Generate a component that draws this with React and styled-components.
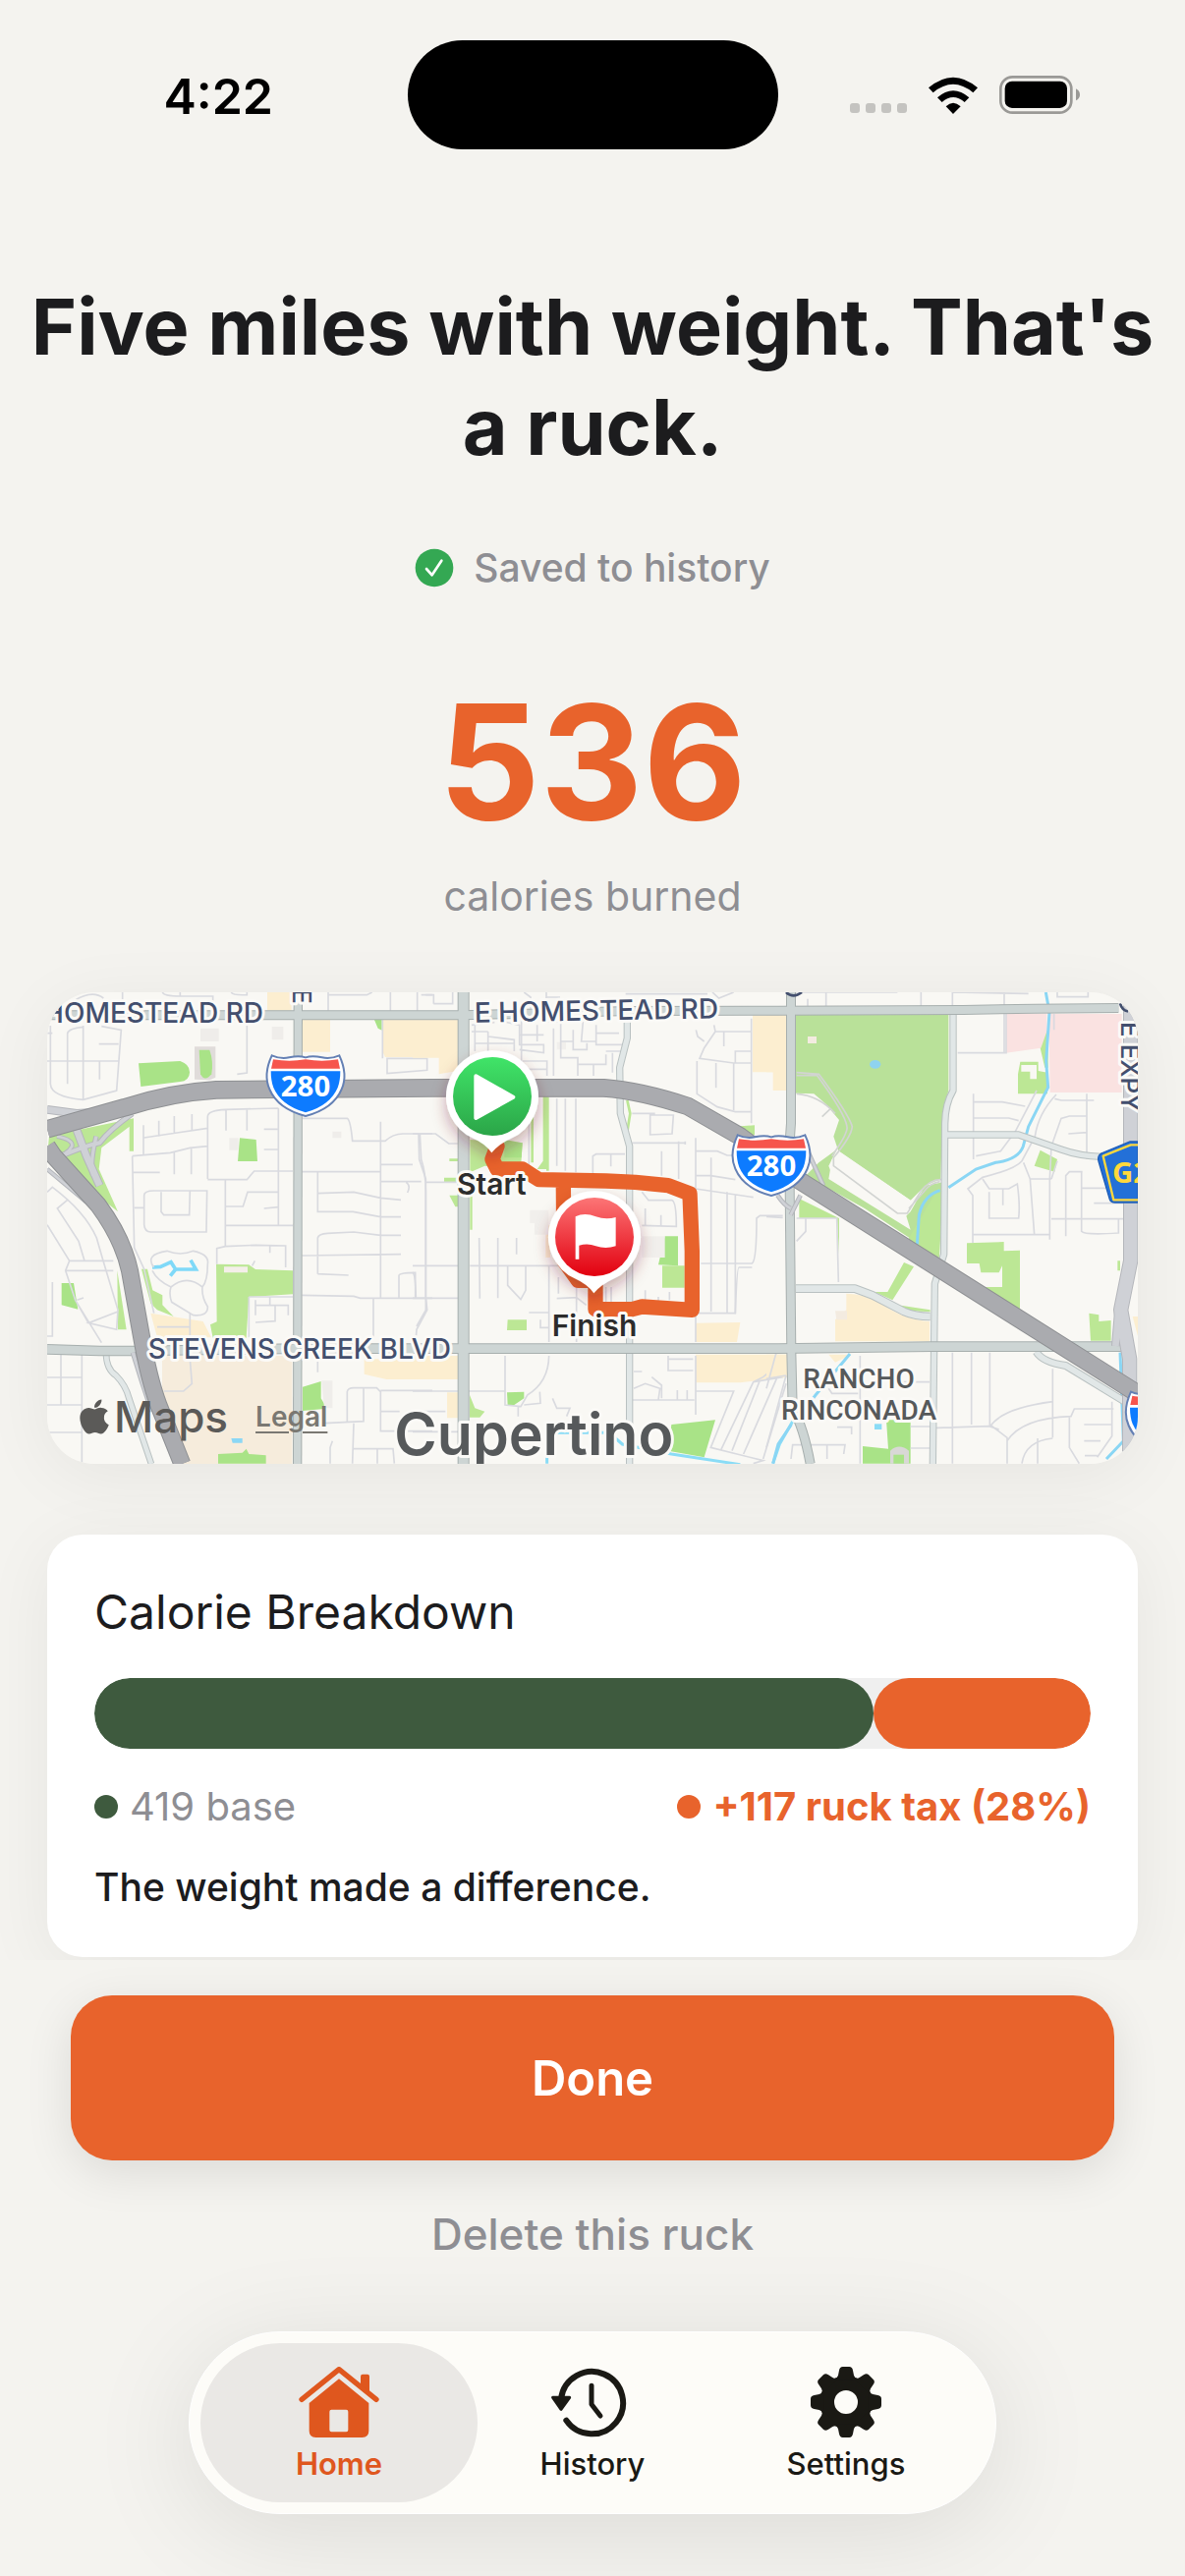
import React from 'react';
import styled, { createGlobalStyle } from 'styled-components';
import { FaApple } from 'react-icons/fa';

const GlobalStyle = createGlobalStyle`
    * {
        box-sizing: border-box;
    }
    body {
        margin: 0;
        background-color: #f4f3ef;
        font-family: Inter, "Liberation Sans", sans-serif;
        color: #1c1c1e;
    }
    h1, h2, p {
        margin: 0;
    }
    button {
        border: none;
        padding: 0;
        background: none;
        font-family: inherit;
        cursor: pointer;
    }
`;

const Screen = styled.div`
    min-height: 100vh;
    display: flex;
    flex-direction: column;
    overflow: hidden;
`;

const StatusBar = styled.header`
    display: grid;
    grid-template-columns: 1fr 377px 1fr;
    align-items: center;
    padding-top: 41px;
`;

const Time = styled.div`
    padding: 3px 0 0 30px;
    text-align: center;
    font-size: 50px;
    font-weight: 600;
    line-height: 60px;
    color: #000;
`;

const Island = styled.div`
    height: 111px;
    border-radius: 56px;
    background-color: #000;
`;

const StatusIcons = styled.div`
    display: flex;
    align-items: flex-end;
    justify-content: flex-end;
    gap: 22px;
    padding-right: 107px;
`;

const Content = styled.main`
    display: flex;
    flex-direction: column;
    align-items: center;
    padding: 129px 24px 3px;
`;

const Headline = styled.h1`
    max-width: 1160px;
    text-align: center;
    font-size: 79px;
    font-weight: 700;
    line-height: 102px;
`;

const Saved = styled.div`
    display: flex;
    align-items: center;
    gap: 20px;
    margin-top: 69px;
    font-size: 39px;
    font-weight: 500;
    line-height: 48px;
    color: #8e8e93;
`;

const Calories = styled.div`
    margin-top: 93px;
    font-size: 162px;
    font-weight: 700;
    line-height: 160px;
    color: #e8632c;
`;

const CaloriesLabel = styled.div`
    margin-top: 33px;
    font-size: 41px;
    line-height: 48px;
    color: #8e8e93;
`;

const Cards = styled.div`
    align-self: stretch;
    display: flex;
    flex-direction: column;
    gap: 72px;
    margin-top: 74px;
    padding: 0 24px;
`;

const MapCard = styled.section`
    position: relative;
    height: 480px;
    border-radius: 48px;
    overflow: hidden;
    background-color: #f9f8f4;
`;

const Elevated = styled.div`
    border-radius: 48px;
    box-shadow: 0 12px 72px rgba(0, 0, 0, 0.06);
`;

const MapSvg = styled.svg`
    display: block;
    width: 100%;
    height: 100%;
`;

const Attribution = styled.div`
    position: absolute;
    left: 28px;
    bottom: 20px;
    display: flex;
    align-items: center;
    color: #5b5a58;
`;

const MapsName = styled.span`
    font-size: 44px;
    font-weight: 500;
    line-height: 56px;
`;

const Legal = styled.a`
    margin-left: 28px;
    font-size: 28px;
    font-weight: 600;
    color: #7a7872;
    text-underline-offset: 5px;
`;

const Card = styled.section`
    padding: 48px;
    border-radius: 36px;
    background-color: #fff;
    box-shadow: 0 12px 72px rgba(0, 0, 0, 0.06);
`;

const CardTitle = styled.h2`
    font-size: 48px;
    font-weight: 400;
    line-height: 62px;
`;

const Bar = styled.div`
    display: flex;
    height: 72px;
    margin-top: 36px;
    border-radius: 36px;
    background-color: #efefef;
    overflow: hidden;
`;

const Segment = styled.div`
    flex: ${({ $value }) => $value} 0 0;
    border-radius: 36px;
    background-color: ${({ $color }) => $color};
`;

const Legend = styled.div`
    display: flex;
    justify-content: space-between;
    margin-top: 36px;
`;

const LegendItem = styled.div`
    display: flex;
    align-items: center;
    gap: 12px;
    font-size: 40px;
    font-weight: ${({ $strong }) => ($strong ? 700 : 400)};
    line-height: 46px;
    color: ${({ $strong }) => ($strong ? '#e8632c' : '#8e8e93')};
`;

const Dot = styled.span`
    width: 24px;
    height: 24px;
    border-radius: 50%;
    background-color: ${({ $color }) => $color};
`;

const Note = styled.p`
    margin-top: 36px;
    font-size: 39px;
    font-weight: 500;
    line-height: 46px;
`;

const Footer = styled.footer`
    position: relative;
    flex: 1;
    display: flex;
    flex-direction: column;
    align-items: center;
    padding: 36px 72px 62px;
    background-color: #f4f3ef;
`;

const DoneButton = styled.button`
    width: 100%;
    height: 168px;
    border-radius: 42px;
    background-color: #e8632c;
    box-shadow: 0 12px 48px rgba(0, 0, 0, 0.1);
    font-size: 49px;
    font-weight: 600;
    color: #fff;
`;

const DeleteButton = styled.button`
    margin-top: 45px;
    font-size: 44px;
    font-weight: 500;
    line-height: 60px;
    color: #8e8e93;
`;

const TabBar = styled.nav`
    display: flex;
    margin-top: 69px;
    padding: 11px;
    border-radius: 93px;
    background-color: #fdfcf8;
    border: 1px solid #fff;
    box-shadow: 0 18px 110px rgba(0, 0, 0, 0.1);
`;

const Tab = styled.button`
    display: flex;
    flex-direction: column;
    align-items: center;
    width: 282px;
    height: 162px;
    padding-top: 24px;
    border-radius: 81px;
    background-color: ${({ $active }) => ($active ? '#eae8e5' : 'transparent')};
    color: ${({ $active }) => ($active ? '#df571e' : '#1a1914')};

    & + & {
        margin-left: -24px;
    }
`;

const TabLabel = styled.span`
    margin-top: 9px;
    font-size: 31px;
    font-weight: ${({ $active }) => ($active ? 600 : 500)};
    line-height: 36px;
`;

const MapLabel = styled.text`
    font-family: ${({ $family }) => $family || 'Inter'}, sans-serif;
    font-size: ${({ $size }) => $size}px;
    font-weight: ${({ $weight }) => $weight || 500};
    fill: ${({ $color }) => $color || '#434f6e'};
    stroke: #fbfaf7;
    stroke-width: 18px;
    stroke-linejoin: round;
    paint-order: stroke;
`;

const ShieldText = styled.text`
    font-family: "Noto Sans", sans-serif;
    font-size: 88px;
    font-weight: 700;
    fill: ${({ $color }) => $color || '#fff'};
`;

/* Map geometry: 3 units per pixel */

const ARTERIALS = [
  { w: 30, d: 'M0 70H1271L1776 57L2232 56L2796 54L3016 50L3271 48' },
  { w: 28, d: 'M766 30L764 1440' },
  { w: 36, d: 'M1271 0V1440' },
  { w: 30, d: 'M2271 0V400L2266 470L2268 700L2272 1100L2276 1270Q2310 1330 2330 1440' },
  { w: 32, d: 'M0 1090L160 1095L260 1095L764 1088H2232L2700 1082L3286 1082' },
];

const COLLECTORS = [
  { w: 22, d: 'M2766 65V300Q2742 340 2741 400L2738 800L2710 890L2704 1440' },
  { w: 22, d: 'M2741 435H2966L3096 480Q3150 500 3220 502' },
  { w: 26, d: 'M2286 905H2466L2520 925L2616 975Q2650 990 2696 990' },
  { w: 22, d: 'M1771 70V140L1748 230L1750 370L1778 470V1440' },
  { w: 20, d: 'M180 1100Q180 1150 210 1170Q240 1200 250 1240L318 1440' },
  { w: 24, d: 'M3020 1098Q3040 1130 3110 1140L3300 1256' },
];

const EXPRESSWAYS = [
  { w: 46, d: 'M3308 30V820L3278 970L3305 1120V1440' },
  { w: 26, d: 'M3272 960L3262 1080' },
  { w: 26, d: 'M0 358L90 370L250 360' },
  { w: 26, d: 'M90 420L120 500L160 590' },
  { w: 18, d: 'M20 510Q110 470 160 460Q190 420 260 370' },
  { w: 14, d: 'M30 440Q80 450 76 470Q60 500 20 500' },
  { w: 16, d: 'M150 440Q130 520 140 560' },
  { w: 14, d: 'M0 540L120 640' },
  { w: 16, d: 'M262 1100L290 1190L320 1280' },
  { w: 14, d: 'M2320 480L2370 590M2230 620Q2250 650 2270 660M2300 620L2270 680' },
];

const FREEWAYS = [
  { w: 56, d: 'M0 418L236 352Q380 306 516 298L1176 292H1700Q1810 300 1956 348L2116 440L2296 574L3330 1226' },
  { w: 54, d: 'M0 470L20 500L156 650Q230 750 252 850L286 1040Q310 1180 340 1260L412 1440' },
];

const PARK = '#bce795';
const PARK_DARK = '#a9e387';
const SHOP = '#fceed0';

function RoadSet({ roads, fill, casing }) {
  return (
    <g fill="none" strokeLinejoin="round">
      {roads.map((r) => (
        <path key={r.d} d={r.d} stroke={casing} strokeWidth={r.w} />
      ))}
      {roads.map((r) => (
        <path key={r.d} d={r.d} stroke={fill} strokeWidth={r.w - 6} />
      ))}
    </g>
  );
}

function WestArea() {
  return (
    <g transform="translate(-24 -30)">
      <path fill={SHOP} d="M696 30H770V86H696ZM802 112H888V212H802ZM1050 112H1200V228H1056L1050 215ZM340 1010L500 1035L525 1084H360ZM992 1150H1200V1212H1060L992 1196Z" />
      <path fill="#f6ecdc" d="M375 1140H772V1470H440L375 1260Z" />
      <path fill={PARK_DARK} d="M303 247L430 240Q460 250 459 275Q458 300 430 303L310 318ZM612 475L662 480L666 546H606ZM804 1205V1235L860 1218V1270L872 1290L870 1302L804 1308ZM1022 112H1046V146L1034 140ZM68 918H105L118 998L68 985ZM546 1440L620 1436L632 1424L640 1440L692 1444V1469H546Z" />
      <path fill="#e0dcda" d="M474 196H538V290L520 298L474 296Z" />
      <path fill={PARK_DARK} d="M488 206H520Q532 240 526 280Q505 305 492 280Z" />
      <path fill={PARK} d="M540 860L640 862L660 876L774 880V952L640 960L632 1085H530L522 1045L542 1036ZM120 450L288 415V515H275V440L190 505L182 570L240 700L24 530L30 470ZM238 880L266 1060L240 1060ZM312 875H330L346 940L376 955V985L410 1020L360 1000L340 980Z" />
      <path fill="#f4efe9" d="M564 868H636V886H564Z" />
      <path fill="#efedea" d="M492 140H548V180H492ZM710 135H745V175H710ZM580 475H608V512H580ZM895 455H922V475H895ZM862 1216H895V1300H870Z" />
      <path fill="none" stroke="#7fd9f8" strokeWidth="11" d="M345 870L370 868L402 854L416 876H478L462 848M416 876L400 896" />
      <path fill="#8bd7f5" d="M586 1392H620V1406H590Z" />
      <g fill="none" stroke="#d9dadf" strokeWidth="5">
        <path d="M24 240H242M134 132V356M86 310V155Q90 140 134 136M34 132V310Q36 350 134 358L236 330L250 145L190 134M182 188H242M184 240V296M24 155H40" />
        <path d="M254 30V86M376 30Q380 42 430 42H530V90M430 30V42M586 30Q590 40 634 38V30M634 130V276L604 280M100 60Q160 20 196 48" />
        <path d="M882 30V86M882 38H1000L1016 30M1072 30V86M1154 30V86M1166 38H1200M1062 232H1184V268L1062 278ZM1048 112V232" />
        <path d="M514 600V410Q514 390 570 388L730 384M514 445L400 462L320 474M318 436V528M365 422V470M412 408V462M466 402V450M570 388V452M634 388V452M730 384V742M284 530L400 520L460 505L514 500M284 530L290 810L320 875L350 1010M284 580H368M412 520V586M464 505V586M686 448H730M686 510H730" />
        <path d="M514 602H634L656 576H774M568 602V806M568 742H774M568 684H622L636 640H730M686 690L730 686M290 688H320M320 740V650Q320 636 350 636H512L510 762H340Q322 762 320 740ZM372 640V700L380 710H458L460 636" />
        <path d="M542 860V812L568 806L660 802L752 804V870M704 802V826M658 850L650 865M350 870Q320 830 390 820Q430 836 470 820Q520 830 514 860Q514 910 498 930Q495 960 514 990Q515 1020 470 1016L404 976Q395 950 402 930Q360 910 345 880M402 930Q450 890 498 930M460 1010V1084M360 1052H460" />
        <path d="M640 960H774M640 960V1084M660 970V1016M660 986H760V1016M704 962V986M720 986V1034L660 1038" />
        <path d="M24 640L40 625Q140 700 175 780L195 850M85 665L55 690L120 790L138 850M24 740L92 850L80 880L110 970L190 1100M92 850H226M80 880H226M195 850L240 1000L236 1060L150 1040L240 1005M115 970L135 963M40 915V1080L24 1080M150 1040L110 970" />
        <path d="M66 1130V1288M130 1130V1469M24 1206H130M24 1290H130M24 1374H130" />
        <path d="M802 415H940Q950 420 956 484H1056Q1080 462 1110 462H1200M1042 425V962M802 578H1042M1042 556H1140M1042 608H1166M1162 462L1166 540Q1180 580 1180 640V960L1184 1000L1152 1060L1150 1084M850 578V700H958L1042 716H1104M850 644L960 640L1042 658L1104 664M850 890V780Q852 768 880 766L960 762L1042 772H1104M802 834L1104 830M850 890L944 894M802 955L960 958L980 964H1200M1098 962V895Q1100 886 1148 886V962M1020 964V1084M1120 610Q1135 620 1124 642" />
        <path d="M940 1344V1250Q942 1238 960 1238H1030L1042 1250V1370H1200M990 1238V1340L870 1346M1042 1246H1200M1042 1310H1100M960 1346L956 1469M956 1424H1080L1084 1469M888 1469V1420L895 1400M1032 1424V1469M850 1140V1190M460 1150L466 1225L440 1248H380" />
      </g>
    </g>
  );
}

function CentralArea() {
  return (
    <g transform="translate(1116 -30)">
      <path fill={SHOP} d="M0 112H138V270L80 280V230H0ZM1038 100H1145V330H1102V274H1038ZM864 1040L1000 1038L990 1098H864ZM864 1136H1145V1205L1000 1222H864ZM0 1140H138V1212H0ZM105 1252H138V1330H105ZM406 740H420V840H406Z" />
      <path fill={PARK} d="M175 480L335 490L330 570L220 560L175 580ZM398 348H412V570H380L398 545ZM290 1030H348V1062H288ZM762 865H830V932H762ZM174 1260L190 1300L220 1310L205 1328H174ZM175 560H182V755H175ZM112 538H138V546H112ZM96 596H138V610H96ZM112 650H138V685H130ZM980 440L1044 436V465L1010 465Z" />
      <path fill={PARK_DARK} d="M280 480L335 490L332 535H280ZM770 775H810V865L750 862ZM288 1252L340 1250V1270L310 1290H290ZM790 1350L924 1336L890 1450L780 1430Z" />
      <path fill="none" stroke={PARK} strokeWidth="8" d="M412 348V575M365 390V550M655 360L664 400L656 450" />
      <path fill="#f1efec" d="M358 695H415V770H372V735H358ZM700 775H770V840H700ZM440 182H468V205H440Z" />
      <path fill="none" stroke="#8adcf6" strokeWidth="9" d="M410 1469V1440M440 1375H600L640 1410L790 1440L1000 1472M1160 1340L1120 1410L1100 1469" />
      <g fill="none" stroke="#d9dadf" strokeWidth="5">
        <path d="M180 130L250 122M180 150H230M190 130V210M190 186H310M230 165L310 175V210M230 150V240M280 120L326 130V190H400V215L326 205M326 160H400M332 70V265H410M336 240H410V285M380 130V180M400 120H452V230H504V285M452 180H490M430 140V230M490 145V205H532V185M520 120L515 180H560M560 130V190H640M560 155H630M590 210H640M590 220V250H552V285M610 215V275M504 250H552M430 230V285" />
        <path d="M64 65H122V30M40 38H64V65M340 30L360 45V80M408 30V60M408 45H450M650 35H900M915 30L935 48L980 30M920 130L924 150H1034M950 150V195M924 150L890 200L876 232L980 246H1034M865 145L870 165L890 180M1034 110V430M980 246V390M985 246V210H1034M926 246V322M868 240V340L930 380L985 395H1034" />
        <path d="M412 348H620M466 355V575M498 355V580M440 355V560M355 395V570M670 400H740M725 405H796L792 462L725 465ZM670 490H832M832 485V495M550 590V530L560 524H648M605 524V562M760 515V590M812 485V600M864 515V1098M864 515H930L960 528H985M864 475V515M864 590H910L985 602M911 535V1005M864 630L1040 656M960 640V1008M985 650V1012M700 640L720 665H792Q805 670 805 745L700 742M710 690V742M758 710V742" />
        <path d="M0 462H70L110 492H138M18 462L20 540L40 600V1000L12 1050M40 610H138M0 865H138M0 964H138M0 886Q8 890 10 962M203 780L205 965M260 780V964M317 780V830M175 865H450M290 865V925L330 968L345 940V865M416 865V1098M355 1008H416M390 1030V1054H416M440 965L500 962L530 985M445 900V950M500 925V1098M590 930V975M606 930V975M710 940V970M750 960V975M784 945V970M880 858H1036Q1050 850 1050 720L1060 712H1130M864 1010H985Q990 870 996 870H1036M1140 730V760" />
        <path d="M282 1140V1290L330 1295L350 1260Q415 1220 416 1140M388 1250L390 1285L340 1290M0 1248H282M322 1295V1325M427 1270L440 1300H480L470 1325M0 1310H100M0 1372H138M780 1140V1185H856M675 1188H700M670 1275H860M675 1240L710 1225L755 1240L750 1275M808 1245V1275M838 1245V1275M730 1205L760 1230V1270M780 1150H856M864 1140V1320M864 1248H980L910 1420L1070 1460L1040 1469M1110 1136L1112 1170L1070 1205L1040 1220L940 1430M1040 1220L1130 1205M1060 1215L975 1430M1112 1208L1010 1440M1140 1225L1070 1455" />
      </g>
    </g>
  );
}

function EastArea() {
  return (
    <g transform="translate(2196 -30)">
      <path fill="#b9e199" d="M90 96H556V330L538 400L532 600L485 620L440 665L220 515L205 470L222 420L180 370L145 340L90 338Z" />
      <path fill="#b9e199" d="M215 510L190 560L205 600L420 720L440 700L485 620L540 610L528 840L300 690L120 590L160 550Z" />
      <path fill={PARK} d="M525 628L538 640L525 850L430 790ZM100 660L222 720V830L216 720H100ZM420 855L450 868L385 970L330 945L370 945ZM612 796L725 792V820L774 818V1005L650 930H720V865L710 886H655L650 858H612ZM775 242H830V270L858 275V340H768V280ZM842 148H860V260H850L836 200ZM836 512L888 540L880 578L818 560ZM985 1010L1015 1015V1035L1052 1032V1094H990ZM1072 850V880H1080V850ZM400 985L500 1000V1006L430 1002Z" />
      <path fill="#f9f8f4" d="M778 252H825V295H805V272H778ZM222 515L440 665L420 690L440 755L190 600L200 540Z" />
      <path fill={PARK_DARK} d="M366 1336H440V1469H294V1416L372 1424Z" />
      <path fill="#d9d8d6" d="M378 1430Q405 1405 435 1430V1469H378Z" />
      <path fill={PARK_DARK} d="M388 1442H420V1469H388Z" />
      <path fill="#fae2e1" d="M732 96H856V150L838 200L732 215ZM862 96H1085V336H866Z" />
      <path fill={SHOP} d="M0 100H60V330H20V274H0ZM244 950Q300 950 350 980Q420 1030 498 1035V1096H210V1030L244 1000ZM0 1136H65V1205H0ZM190 1136H260L210 1160ZM1118 1020H1134V1080Z" />
      <path fill="#f3ebe0" d="M210 1003H246V1030H214ZM126 165H153V186H126Z" />
      <ellipse cx="332" cy="250" rx="17" ry="13" fill="#8fd3ef" />
      <path fill="#8adcf6" d="M330 1348H352V1365H330Z" />
      <g fill="none" stroke="#8ad6f4" strokeWidth="9">
        <path d="M853 30L864 90L854 240L860 320L800 440L784 500Q770 540 700 550L640 570L556 626M530 635Q480 650 466 710L460 800" />
        <path d="M255 1134L150 1260L120 1300M76 1350L36 1410L20 1469M1080 1130L1090 1400L1038 1455" />
        <path d="M1130 840L1105 980" strokeWidth="5" />
      </g>
      <g fill="none" stroke="#d2d4d2" strokeWidth="5">
        <path d="M92 275L160 280Q250 400 262 440Q260 470 205 535V560L400 705H430L470 640Q500 600 535 602M92 284H155Q240 400 246 440Q250 460 200 530M435 690L480 640Q500 612 530 608M92 340Q160 345 210 400M196 385L170 410" />
      </g>
      <g fill="none" stroke="#d9dadf" strokeWidth="5">
        <path d="M182 30V76M126 50V76M472 30V76M568 30V76M726 30V76M60 30H400M568 30L800 34M888 30V44H982V30M878 96V145M732 90V215H584M726 90V215" />
        <path d="M632 340V540M632 365H720L790 378M632 414H740L770 422M825 330L760 455L715 515L640 530M885 342Q830 400 820 470L780 545Q760 570 660 595L615 630L630 650V795M880 355L900 360H1000M978 340V540M870 500L900 415L925 408H978M922 462L978 458M660 600L680 630H740L766 615Q775 680 770 720H680V640M722 630V680M785 550L805 600H870M805 600L818 770M870 500L865 600V785M632 770H866M870 722H1090M914 775V590L925 578H965M962 578V760Q970 772 1075 765V720M962 628H1090M1000 674H1090M888 545L870 600" />
        <path d="M92 720H215L220 915M120 720V760L92 790M568 1130V1469M626 1130V1350M682 1130V1350L735 1390V1469M286 1140V1469M400 1220H498M440 1356H500L520 1360L680 1355L710 1365M874 1180V1390M874 1280Q720 1300 684 1355M735 1400Q780 1330 930 1325L940 1302H1060M925 1325V1420L955 1469M1055 1280V1385L1010 1450M780 1469Q790 1400 874 1392M828 1392V1469M970 1350H1055M970 1400H1020M972 1445H1010M440 1422H498M190 1240L200 1255H280M216 1358H260V1380M75 1455L80 1412H240L236 1440M185 1412V1455M0 1420L60 1200M30 1130L0 1240M0 1210L60 1200M0 715L50 718" />
      </g>
    </g>
  );
}

function Interstate({ x, y, route }) {
  return (
    <g transform={`translate(${x} ${y})`}>
      <path
        d="M-103 2Q-75 14 -50 8Q-20 2 0 8Q20 2 50 8Q75 14 103 2Q130 60 110 105Q85 165 0 187Q-85 165 -110 105Q-130 60 -103 2Z"
        fill="#fff"
        stroke="#6480b4"
        strokeWidth="6"
      />
      <path d="M-99 14Q-50 22 0 14Q50 22 99 14L105 42H-105Z" fill="#f6554c" />
      <path d="M-106 50H106Q106 80 98 100Q75 155 0 176Q-75 155 -98 100Q-106 80 -106 50Z" fill="#0d7bff" />
      {route && <ShieldText x="0" y="127" textAnchor="middle">{route}</ShieldText>}
    </g>
  );
}

function Pin({ x, y, fill, children }) {
  return (
    <g transform={`translate(${x} ${y})`}>
      <path
        d="M0 -140A140 140 0 0 1 60 127Q20 145 -2 172Q-20 145 -60 127A140 140 0 0 1 0 -140Z"
        fill="#fff"
        filter="url(#pinShadow)"
      />
      <circle r="120" fill={fill} />
      {children}
    </g>
  );
}

function RouteMap() {
  return (
    <MapSvg viewBox="0 0 3330 1440" preserveAspectRatio="xMidYMid slice" role="img" aria-label="Route map">
      <defs>
        <linearGradient id="startFill" x1="0" y1="0" x2="0" y2="1">
          <stop offset="0" stopColor="#40e468" />
          <stop offset="1" stopColor="#2ba548" />
        </linearGradient>
        <linearGradient id="finishFill" x1="0" y1="0" x2="0" y2="1">
          <stop offset="0" stopColor="#fc7576" />
          <stop offset="1" stopColor="#e2000f" />
        </linearGradient>
        <filter id="pinShadow" x="-50%" y="-50%" width="200%" height="200%">
          <feDropShadow dx="0" dy="22" stdDeviation="22" floodColor="#6b1f2c" floodOpacity="0.35" />
        </filter>
      </defs>

      <WestArea />
      <CentralArea />
      <EastArea />

      <RoadSet roads={COLLECTORS} fill="#e1e7e7" casing="#b9c1c1" />
      <RoadSet roads={ARTERIALS} fill="#cdd5d4" casing="#a7afae" />
      <RoadSet roads={EXPRESSWAYS} fill="#cfd1d6" casing="#b4b6bb" />
      <RoadSet roads={FREEWAYS} fill="#aaabaf" casing="#8e9093" />

      <path
        transform="translate(1116 -30)"
        d="M258 500L243 540L258 570H335L385 602L590 606L680 610L780 620L846 645L853 820V1000L700 990L670 998H558V910H505L462 850L460 620"
        fill="none"
        stroke="#e8632c"
        strokeWidth="46"
        strokeLinejoin="round"
        strokeLinecap="round"
      />

      <MapLabel x="660" y="92" textAnchor="end" $size={84}>HOMESTEAD RD</MapLabel>
      <MapLabel x="1305" y="92" $size={84} transform="rotate(-1 1305 92)">E HOMESTEAD RD</MapLabel>
      <MapLabel x="308" y="1118" $size={84}>STEVENS CREEK BLVD</MapLabel>
      <MapLabel textAnchor="end" transform="translate(751 36) rotate(90)" $size={78}>E</MapLabel>
      <MapLabel textAnchor="end" transform="translate(3279 364) rotate(90)" $size={78}>E EXPY</MapLabel>
      <path d="M3276 34Q3282 56 3300 58" fill="none" stroke="#434f6e" strokeWidth="8" />
      <path d="M2256 0Q2278 20 2304 0" fill="none" stroke="#434f6e" strokeWidth="8" />
      <MapLabel x="2478" y="1208" textAnchor="middle" $family="Roboto" $size={84} $color="#56595b">RANCHO</MapLabel>
      <MapLabel x="2478" y="1304" textAnchor="middle" $family="Roboto" $size={84} $color="#56595b">RINCONADA</MapLabel>
      <MapLabel x="1486" y="1412" textAnchor="middle" $size={177} $weight={600} $color="#56595b">Cupertino</MapLabel>

      <Interstate x={789} y={191} route="280" />
      <Interstate x={2211} y={434} route="280" />
      <Interstate x={3412} y={1218} />

      <path d="M3330 456H3306L3218 492Q3206 500 3210 516L3244 632Q3248 642 3260 642H3330Z" fill="#2370d8" stroke="#1f5db5" strokeWidth="4" />
      <path d="M3336 466H3308L3224 500L3256 634H3336" fill="none" stroke="#ffd83c" strokeWidth="7" strokeLinejoin="round" />
      <ShieldText x="3252" y="582" $color="#ffd83c">G2</ShieldText>

      <Pin x={1359} y={318} fill="url(#startFill)">
        <path d="M-50 -62L64 2L-50 66Z" fill="#fff" stroke="#fff" strokeWidth="12" strokeLinejoin="round" />
      </Pin>
      <Pin x={1671} y={747} fill="url(#finishFill)">
        <path d="M-58 -62Q-30 -76 4 -62Q34 -52 65 -60V28Q34 38 4 28Q-20 18 -47 26V68H-58Z" fill="#fff" />
      </Pin>
      <MapLabel x="1357" y="618" textAnchor="middle" $size={90} $weight={600} $color="#2c2c2c">Start</MapLabel>
      <MapLabel x="1671" y="1050" textAnchor="middle" $size={90} $weight={600} $color="#2c2c2c">Finish</MapLabel>
    </MapSvg>
  );
}

function HomeIcon() {
  return (
    <svg width="84" height="72" viewBox="365 117 252 216" fill="currentColor" aria-hidden="true">
      <path d="M377 217L491 125L605 217" fill="none" stroke="currentColor" strokeWidth="16" strokeLinecap="round" strokeLinejoin="round" />
      <path d="M557 172V146Q557 140 563 140H578Q584 140 584 146V196Z" />
      <path fillRule="evenodd" d="M491 154L582 228V313Q582 333 562 333H420Q400 333 400 313V228ZM468 248Q462 248 462 254V310Q462 316 468 316H513Q519 316 519 310V254Q519 248 513 248Z" />
    </svg>
  );
}

function HistoryIcon() {
  return (
    <svg width="84" height="72" viewBox="92 117 252 216" fill="none" stroke="currentColor" strokeWidth="18" strokeLinecap="round" aria-hidden="true">
      <path d="M122 215A95 95 0 1 1 138 281" />
      <path d="M215 175V232L242 267" strokeWidth="15" strokeLinejoin="round" />
      <path d="M97 211H148L122 247Z" fill="currentColor" strokeWidth="9" strokeLinejoin="round" />
    </svg>
  );
}

const TEETH = [0, 45, 90, 135, 180, 225, 270, 315];

function GearIcon() {
  return (
    <svg width="84" height="72" viewBox="-126 -108 252 216" fill="currentColor" aria-hidden="true">
      <circle r="58" fill="none" stroke="currentColor" strokeWidth="44" />
      {TEETH.map((angle) => (
        <path
          key={angle}
          transform={`rotate(${angle})`}
          d="M-36 -68Q-26 -74 -24 -82L-21 -97Q-19 -108 -10 -108H10Q19 -108 21 -97L24 -82Q26 -74 36 -68Z"
        />
      ))}
    </svg>
  );
}

const TABS = [
  { label: 'Home', Icon: HomeIcon },
  { label: 'History', Icon: HistoryIcon },
  { label: 'Settings', Icon: GearIcon },
];

function App() {
  const base = 419;
  const tax = 117;
  const [tab, setTab] = React.useState('Home');

  return (
    <>
      <GlobalStyle />
      <Screen>
        <StatusBar>
          <Time>4:22</Time>
          <Island />
          <StatusIcons>
            <svg width="58" height="11" viewBox="0 0 58 11" fill="#c4c3c0" aria-hidden="true">
              <rect width="10" height="10" rx="3" />
              <rect x="16" width="10" height="10" rx="3" />
              <rect x="32" width="10" height="10" rx="3" />
              <rect x="48" width="10" height="10" rx="3" />
            </svg>
            <svg width="50" height="38" viewBox="0 0 150 114" aria-hidden="true">
              <path d="M0 34Q75 -30 150 34L136 49Q75 -2 14 49ZM27 64Q75 22 124 64L110 78Q75 48 41 78ZM53 91Q75 70 98 91L75 114Z" />
            </svg>
            <svg width="82" height="39" viewBox="0 0 246 117" aria-hidden="true">
              <rect x="4" y="4" width="216" height="109" rx="36" fill="none" stroke="#9a9996" strokeWidth="8" />
              <rect x="17" y="17" width="190" height="82" rx="22" />
              <path d="M234 40Q246 46 246 58Q246 70 234 76Z" fill="#9a9996" />
            </svg>
          </StatusIcons>
        </StatusBar>

        <Content>
          <Headline>Five miles with weight. That's a ruck.</Headline>
          <Saved>
            <svg width="40" height="40" viewBox="0 0 120 120" aria-hidden="true">
              <circle cx="60" cy="60" r="58" fill="#34a853" />
              <path d="M36 63L53 82L82 38" fill="none" stroke="#fff" strokeWidth="8" strokeLinecap="round" strokeLinejoin="round" />
            </svg>
            Saved to history
          </Saved>
          <Calories>{base + tax}</Calories>
          <CaloriesLabel>calories burned</CaloriesLabel>

          <Cards>
            <Elevated>
              <MapCard>
                <RouteMap />
                <Attribution>
                  <FaApple size={40} />
                  <MapsName>Maps</MapsName>
                  <Legal href="#legal">Legal</Legal>
                </Attribution>
              </MapCard>
            </Elevated>

            <Card>
              <CardTitle>Calorie Breakdown</CardTitle>
              <Bar>
                <Segment $value={base} $color="#3e5a3e" />
                <Segment $value={tax} $color="#e8632c" />
              </Bar>
              <Legend>
                <LegendItem>
                  <Dot $color="#3e5a3e" />
                  {base} base
                </LegendItem>
                <LegendItem $strong>
                  <Dot $color="#e8632c" />
                  +{tax} ruck tax (28%)
                </LegendItem>
              </Legend>
              <Note>The weight made a difference.</Note>
            </Card>
          </Cards>
        </Content>

        <Footer>
          <DoneButton type="button">Done</DoneButton>
          <DeleteButton type="button">Delete this ruck</DeleteButton>
          <TabBar>
            {TABS.map(({ label, Icon }) => (
              <Tab key={label} type="button" $active={tab === label} onClick={() => setTab(label)}>
                <Icon />
                <TabLabel $active={tab === label}>{label}</TabLabel>
              </Tab>
            ))}
          </TabBar>
        </Footer>
      </Screen>
    </>
  );
}

export default App;
